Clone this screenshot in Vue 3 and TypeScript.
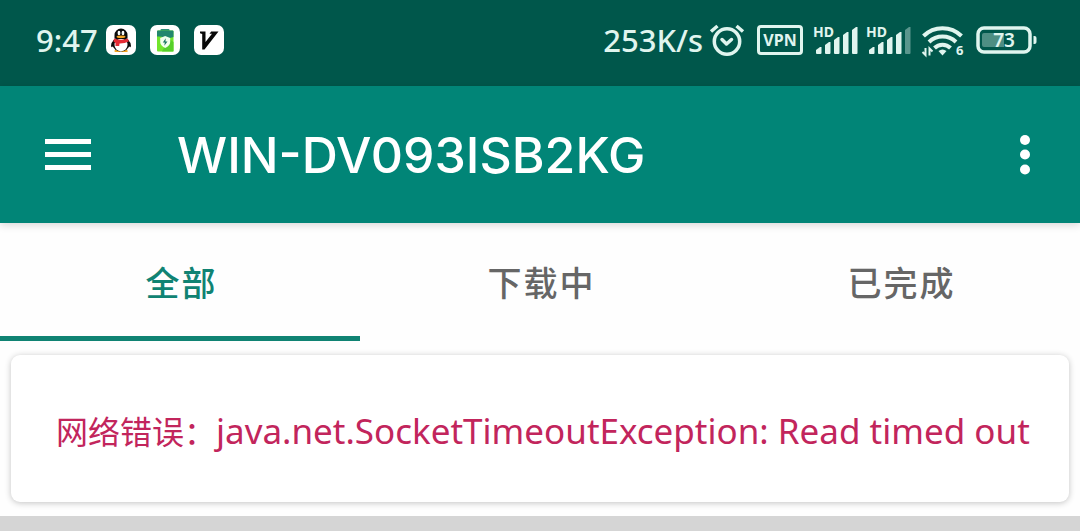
<script setup lang="ts">
import { ref } from 'vue'

const tabs: string[] = ['全部', '下载中', '已完成']
const active = ref(0)

// Signal bars, left to right: each has a slanted top edge from left to right
const bars = [
  { x: 3, left: 28, right: 25 },
  { x: 12, left: 23, right: 20 },
  { x: 21, left: 18, right: 15 },
  { x: 30, left: 13, right: 10 },
  { x: 39, left: 8, right: 5 },
]
const signals = [5, 4]
</script>

<template>
  <div class="screen">
    <div class="status">
      <div class="status-left">
        <span class="clock">9:47</span>
        <svg class="app-icon" viewBox="0 0 30 30" aria-label="QQ">
          <rect width="30" height="30" rx="7" fill="#fff" />
          <path d="M9 25h6l-1 2H9.500q-2-.5-.5-2zM15.500 25h5.500q2 1.500-.5 2h-5z" fill="#f5a623" />
          <path d="M8.500 14Q5 17.500 5 21q.5 2.500 2.500-.5zM21.500 14q3.500 3.500 3.500 7-.5 2.500-2.500-.5z" fill="#0a0a0a" />
          <ellipse cx="15" cy="19" rx="8.500" ry="7.500" fill="#0a0a0a" />
          <ellipse cx="15" cy="20" rx="6.500" ry="6.200" fill="#fff" />
          <path d="M8.500 13.500V10a6.500 6.500 0 0 1 13 0v3.500z" fill="#0a0a0a" />
          <ellipse cx="13" cy="8" rx="1.400" ry="2.200" fill="#fff" />
          <ellipse cx="17" cy="8" rx="1.400" ry="2.200" fill="#fff" />
          <circle cx="13.400" cy="8.300" r=".7" />
          <circle cx="16.600" cy="8.300" r=".7" />
          <ellipse cx="15" cy="11.800" rx="4.500" ry="1.300" fill="#f5a623" />
          <path d="M8 13.500q7 2.500 14 0l.7 3q-4 2-9.200 1.900l-.3 2.600H9.500V18L7.500 16.500z" fill="#e32b35" />
        </svg>
        <svg class="app-icon" viewBox="0 0 30 30" aria-label="电池">
          <rect width="30" height="30" rx="7" fill="#fff" />
          <rect x="10.500" y="4" width="9" height="4" rx="1" fill="#2a8f78" />
          <rect x="7" y="5.500" width="16.500" height="21" rx="1" fill="#72e52c" />
          <path d="M8 5.500h14.500q1 0 1 1V12q-5 2-9 .5t-7.500-1v-5q0-1 1-1z" fill="#23876d" />
          <path d="m19 14 4.500 3v9.500H12z" fill="#56cf2b" />
          <path d="m15.200 11 5 2v4q0 3.500-5 6-5-2.500-5-6v-4z" fill="#f1ffec" />
          <path d="m15.800 13.200-3 4.300h2l-.5 3.300 3.200-4.300h-2.100z" fill="#17755e" />
        </svg>
        <svg class="app-icon" viewBox="0 0 30 30" aria-label="V">
          <rect width="30" height="30" rx="7" fill="#fff" />
          <path d="M6 6.500h5.500V17l6.500-8.300h-2.500l1.700-2.200h7.300L10.500 24.500H8.200V9L6 8.200z" fill="#080808" />
        </svg>
      </div>
      <div class="status-right">
        <span class="clock">253K/s</span>
        <svg class="alarm" width="36" height="36" viewBox="0 0 36 36" aria-label="闹钟">
          <g fill="none" stroke="currentColor" stroke-width="3.500" stroke-linecap="round" stroke-linejoin="round">
            <circle cx="18" cy="19.500" r="12.700" />
            <path d="m13 17.500 4.500 4.500 5-4.500" />
            <path d="M2 9.500 8.500 4M27.500 4l6.500 5.500" stroke-linecap="butt" />
          </g>
        </svg>
        <svg class="vpn" width="46" height="36" viewBox="0 0 46 36">
          <rect x="1.500" y="4.500" width="43" height="27" rx="2.500" fill="none" stroke="currentColor" stroke-width="3" />
          <text x="23" y="24" text-anchor="middle" font-size="16" font-weight="700">VPN</text>
        </svg>
        <svg v-for="level in signals" :key="level" class="signal" width="46" height="36" viewBox="0 0 46 36">
          <text x="0" y="15" font-size="14" font-weight="700">HD</text>
          <path
            v-for="(bar, i) in bars"
            :key="bar.x"
            :d="`M${bar.x} 31V${bar.left}L${bar.x + 4} ${bar.right}h1.500V31q0 1-1 1h-3.500q-1 0-1-1z`"
            fill="currentColor"
            :opacity="i < level ? 1 : 0.4"
          />
        </svg>
        <svg class="wifi" width="44" height="36" viewBox="0 0 44 36">
          <g fill="none" stroke="currentColor" stroke-width="4">
            <path d="M2.500 14a27 27 0 0 1 38 0" />
            <path d="M8 20a19.500 19.500 0 0 1 27 0" />
            <path d="M13.500 26a11.500 11.500 0 0 1 16 0" />
          </g>
          <path d="M17.500 29q4-3 8 0l-4 4.500z" fill="currentColor" />
          <path d="M4.500 26v7L1.500 30M8.500 33.500v-7l3 3" fill="none" stroke="currentColor" stroke-width="2" />
          <text x="35" y="33" font-size="13" font-weight="700">6</text>
        </svg>
        <svg class="battery" width="61" height="36" viewBox="0 0 61 36">
          <rect x="2" y="6" width="52" height="24" rx="6" fill="none" stroke="currentColor" stroke-width="3.500" />
          <path d="M8 11h20v14H8q-2 0-2-2V13q0-2 2-2z" fill="currentColor" opacity=".35" />
          <path d="M57.500 14h1q2 0 2 2v4q0 2-2 2h-1z" fill="currentColor" />
          <text x="28" y="25" text-anchor="middle" font-size="19" font-weight="600">73</text>
        </svg>
      </div>
    </div>

    <header class="bar">
      <button class="icon-button" type="button" aria-label="菜单">
        <svg width="46" height="31" viewBox="0 0 46 31" fill="currentColor">
          <path d="M0 0h46v5H0zM0 13h46v5H0zM0 26h46v5H0z" />
        </svg>
      </button>
      <h1>WIN-DV093ISB2KG</h1>
      <button class="icon-button" type="button" aria-label="更多">
        <svg width="12" height="40" viewBox="0 0 12 40" fill="currentColor">
          <circle cx="6" cy="5" r="5" />
          <circle cx="6" cy="19.500" r="5" />
          <circle cx="6" cy="34.500" r="5" />
        </svg>
      </button>
    </header>

    <div class="tabs" role="tablist">
      <button
        v-for="(tab, i) in tabs"
        :key="tab"
        type="button"
        role="tab"
        class="tab"
        :class="{ active: i === active }"
        :aria-selected="i === active"
        @click="active = i"
      >{{ tab }}</button>
    </div>

    <main>
      <p class="card"><span class="label">网络错误：</span>java.net.SocketTimeoutException: Read timed out</p>
    </main>
  </div>
</template>

<style>
body {
  margin: 0;
  background: #d5d5d5;
}
</style>

<style scoped>
.screen {
  font-family: "Noto Sans", "Noto Sans CJK SC", sans-serif;
  background: #fefefe;
}
.status {
  display: flex;
  justify-content: space-between;
  align-items: center;
  box-sizing: border-box;
  height: 86px;
  padding: 0 43px 6px 36px;
  background: #00574b;
  color: #e0f5ef;
}
.status svg {
  flex: none;
  fill: currentColor;
}
.status-left,
.status-right {
  display: flex;
  align-items: center;
}
.status-left {
  gap: 14px;
}
.status-left .clock {
  margin-right: -6px;
}
.app-icon {
  width: 30px;
  height: 30px;
}
.clock {
  font-size: 31px;
  line-height: 36px;
  font-weight: 500;
}
.alarm {
  margin: 0 12px 0 6px;
}
.vpn {
  margin-right: 10px;
}
.signal {
  margin-right: 7px;
}
.wifi {
  margin: 0 11px 0 2px;
}
.bar {
  position: relative;
  display: flex;
  align-items: center;
  height: 137px;
  padding: 0 49px 0 45px;
  background: #018577;
  color: #fff;
  box-shadow: 0 2px 8px rgba(0, 0, 0, 0.16);
}
h1 {
  flex: 1;
  margin: 0 0 0 86px;
  font-family: Inter, sans-serif;
  font-size: 50px;
  line-height: 60px;
  font-weight: 500;
}
.icon-button {
  display: flex;
  padding: 0;
  border: 0;
  background: none;
  color: inherit;
}
.tabs {
  display: flex;
}
.tab {
  flex: 1;
  height: 118px;
  padding: 4px 0 0 3px;
  border: 0;
  border-bottom: 5px solid transparent;
  background: none;
  color: #666;
  font: 500 34px/40px "Noto Sans CJK SC", sans-serif;
  letter-spacing: 2px;
}
.tab.active {
  border-color: #108373;
  color: #108373;
}
main {
  padding: 14px 11px;
}
.card {
  margin: 0;
  padding: 52px 32px 47px 45px;
  border-radius: 9px;
  background: #fff;
  box-shadow: 0 1px 6px rgba(0, 0, 0, 0.24);
  color: #c2255c;
  font-size: 35px;
  line-height: 48px;
}
.label {
  font-size: 32px;
  line-height: 32px;
}
</style>
